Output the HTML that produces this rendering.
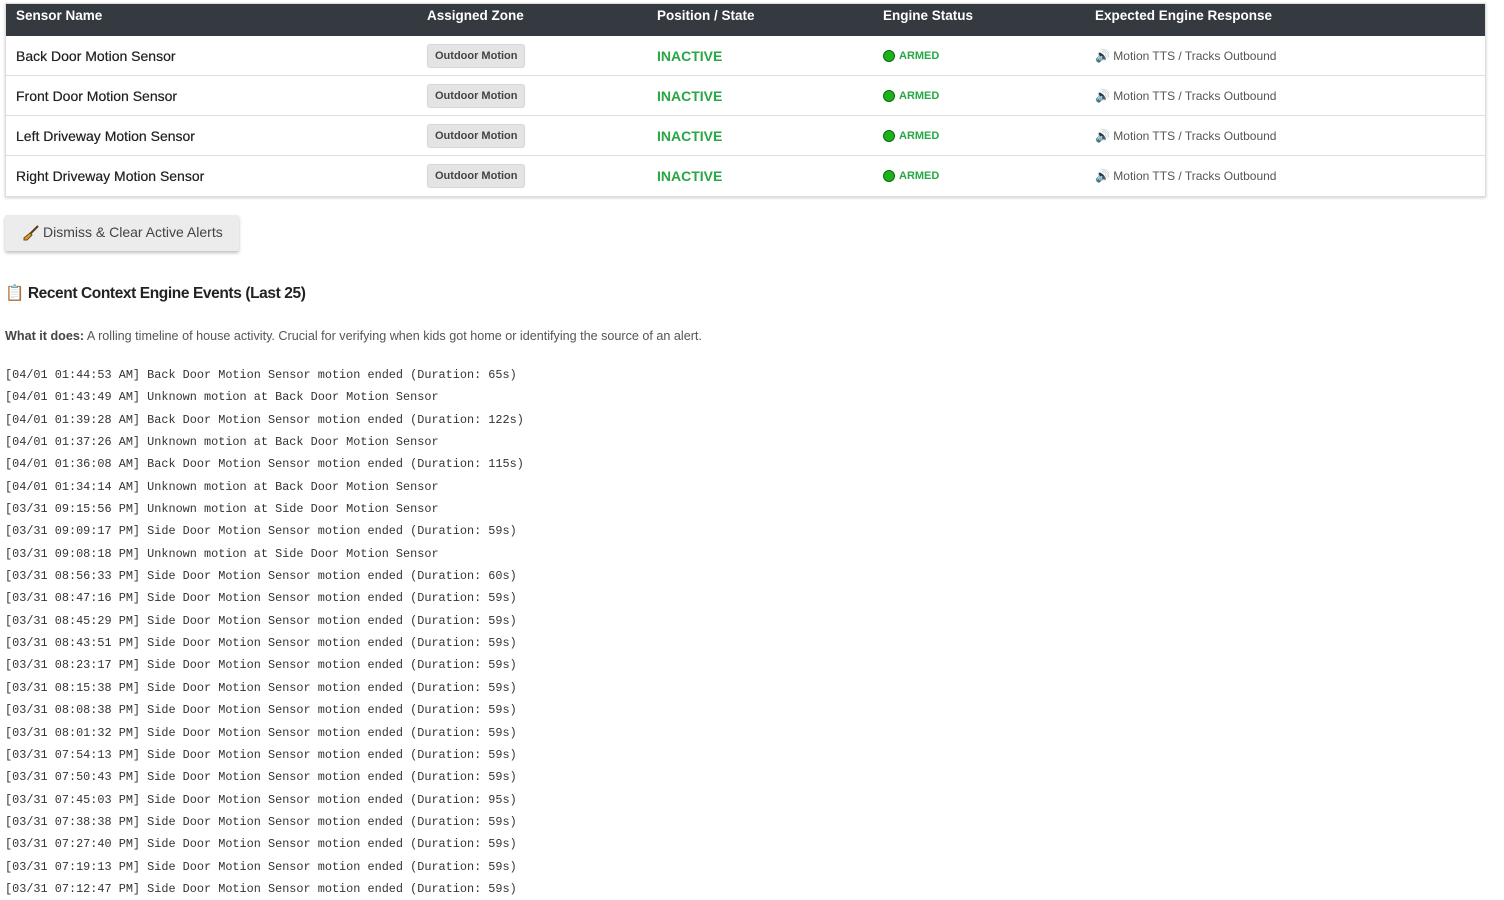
<!DOCTYPE html>
<html><head><meta charset="utf-8"><style>
body{margin:0;background:#fff;font-family:"Liberation Sans",Arial,sans-serif;color:#333;width:1504px;height:899px;overflow:hidden;position:relative}
.tbl{position:absolute;left:5px;top:3px;width:1479px;border:1px solid #ddd;box-shadow:0 1px 3px rgba(0,0,0,.2);background:#fff}
.hdr{height:32px;background:#343a40;color:#fff;font-weight:bold;font-size:13.5px;position:relative}
.row{height:39px;border-top:1px solid #ddd;position:relative;font-size:14px;color:#222}
.nm{text-shadow:0 0 0.4px #222}
.c{position:absolute;top:50%;transform:translateY(-50%);white-space:nowrap}
.hdr .c{top:4px;transform:none}
.badge{background:#e4e4e4;border-radius:3px;padding:5px 7px;font-size:11px;font-weight:bold;color:#444;border:1px solid #d6d6d6}
.inact{color:#28a745;font-weight:bold;font-size:14px}
.armed{color:#28a745;font-weight:bold;font-size:11px}
.dot{display:inline-block;width:12px;height:12px;border-radius:50%;background:#1db21d;border:1px solid #0b6b0b;vertical-align:-3px;margin-right:4px;box-sizing:border-box}
.resp{font-size:12px;color:#555;font-weight:normal}
.btn{position:absolute;left:5px;top:215px;width:234px;height:36px;background:#ececec;box-shadow:0 2px 3px rgba(0,0,0,.25);border-radius:2px;font-size:14px;color:#444;line-height:34px}
h3{position:absolute;left:5px;top:284px;margin:0;font-size:15.5px;color:#222;font-weight:bold;letter-spacing:-.4px}
.desc{position:absolute;left:5px;top:329px;font-size:12.6px;color:#555}
.log{position:absolute;left:5px;top:364px;font-family:"Liberation Mono",monospace;font-size:11.85px;line-height:22.35px;color:#333;white-space:pre}
</style></head><body>
<div class="tbl">
<div class="hdr"><span class="c" style="left:10px">Sensor Name</span><span class="c" style="left:421px">Assigned Zone</span><span class="c" style="left:651px">Position / State</span><span class="c" style="left:877px">Engine Status</span><span class="c" style="left:1089px">Expected Engine Response</span></div>
<div class="row" style="border-top:none;height:39px"><span class="c nm" style="left:10px">Back Door Motion Sensor</span><span class="c badge" style="left:421px">Outdoor Motion</span><span class="c inact" style="left:651px">INACTIVE</span><span class="c armed" style="left:877px"><span class="dot"></span>ARMED</span><span class="c resp" style="left:1089px">🔊 Motion TTS / Tracks Outbound</span></div>
<div class="row"><span class="c nm" style="left:10px">Front Door Motion Sensor</span><span class="c badge" style="left:421px">Outdoor Motion</span><span class="c inact" style="left:651px">INACTIVE</span><span class="c armed" style="left:877px"><span class="dot"></span>ARMED</span><span class="c resp" style="left:1089px">🔊 Motion TTS / Tracks Outbound</span></div>
<div class="row"><span class="c nm" style="left:10px">Left Driveway Motion Sensor</span><span class="c badge" style="left:421px">Outdoor Motion</span><span class="c inact" style="left:651px">INACTIVE</span><span class="c armed" style="left:877px"><span class="dot"></span>ARMED</span><span class="c resp" style="left:1089px">🔊 Motion TTS / Tracks Outbound</span></div>
<div class="row" style="height:40px"><span class="c nm" style="left:10px">Right Driveway Motion Sensor</span><span class="c badge" style="left:421px">Outdoor Motion</span><span class="c inact" style="left:651px">INACTIVE</span><span class="c armed" style="left:877px"><span class="dot"></span>ARMED</span><span class="c resp" style="left:1089px">🔊 Motion TTS / Tracks Outbound</span></div>
</div>
<div class="btn"><svg width="18" height="18" viewBox="0 0 18 18" style="position:absolute;left:17px;top:9px"><path d="M16 2 L8 10" stroke="#5a3a1a" stroke-width="2"/><path d="M8 9 L10 11 L5 16 L2 16 L2 14 Z" fill="#e0a030" stroke="#6b4a10" stroke-width="1"/></svg><span style="position:absolute;left:38px">Dismiss &amp; Clear Active Alerts</span></div>
<h3><span style="font-weight:normal">📋</span> Recent Context Engine Events (Last 25)</h3>
<div class="desc"><b style="color:#444">What it does:</b> A rolling timeline of house activity. Crucial for verifying when kids got home or identifying the source of an alert.</div>
<div class="log">[04/01 01:44:53 AM] Back Door Motion Sensor motion ended (Duration: 65s)
[04/01 01:43:49 AM] Unknown motion at Back Door Motion Sensor
[04/01 01:39:28 AM] Back Door Motion Sensor motion ended (Duration: 122s)
[04/01 01:37:26 AM] Unknown motion at Back Door Motion Sensor
[04/01 01:36:08 AM] Back Door Motion Sensor motion ended (Duration: 115s)
[04/01 01:34:14 AM] Unknown motion at Back Door Motion Sensor
[03/31 09:15:56 PM] Unknown motion at Side Door Motion Sensor
[03/31 09:09:17 PM] Side Door Motion Sensor motion ended (Duration: 59s)
[03/31 09:08:18 PM] Unknown motion at Side Door Motion Sensor
[03/31 08:56:33 PM] Side Door Motion Sensor motion ended (Duration: 60s)
[03/31 08:47:16 PM] Side Door Motion Sensor motion ended (Duration: 59s)
[03/31 08:45:29 PM] Side Door Motion Sensor motion ended (Duration: 59s)
[03/31 08:43:51 PM] Side Door Motion Sensor motion ended (Duration: 59s)
[03/31 08:23:17 PM] Side Door Motion Sensor motion ended (Duration: 59s)
[03/31 08:15:38 PM] Side Door Motion Sensor motion ended (Duration: 59s)
[03/31 08:08:38 PM] Side Door Motion Sensor motion ended (Duration: 59s)
[03/31 08:01:32 PM] Side Door Motion Sensor motion ended (Duration: 59s)
[03/31 07:54:13 PM] Side Door Motion Sensor motion ended (Duration: 59s)
[03/31 07:50:43 PM] Side Door Motion Sensor motion ended (Duration: 59s)
[03/31 07:45:03 PM] Side Door Motion Sensor motion ended (Duration: 95s)
[03/31 07:38:38 PM] Side Door Motion Sensor motion ended (Duration: 59s)
[03/31 07:27:40 PM] Side Door Motion Sensor motion ended (Duration: 59s)
[03/31 07:19:13 PM] Side Door Motion Sensor motion ended (Duration: 59s)
[03/31 07:12:47 PM] Side Door Motion Sensor motion ended (Duration: 59s)</div>
</body></html>
